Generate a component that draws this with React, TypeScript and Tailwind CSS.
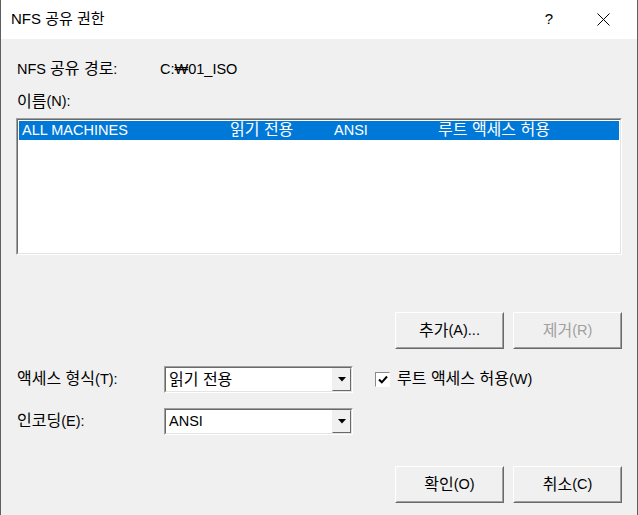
import React from 'react';

const font = "font-['Liberation_Sans','Noto_Sans_CJK_KR',sans-serif]";

// Hangul in the original dialog is rendered a bit wider than the Latin text
const T: React.FC<{ text: string }> = ({ text }) => {
  const parts = text.split(/([\uAC00-\uD7A3]+(?:\s+[\uAC00-\uD7A3]+)*)/);
  return (
    <>
      {parts.map((p, i) =>
        /[\uAC00-\uD7A3]/.test(p) ? (
          <span key={i} className="text-[16px] leading-none">
            {p}
          </span>
        ) : (
          <span key={i}>{p}</span>
        )
      )}
    </>
  );
};

// Classic Win32 sunken frame (list box, combo box)
const Sunken: React.FC<{ className?: string; children?: React.ReactNode }> = ({ className = '', children }) => (
  <div className={`border border-t-[#a0a0a0] border-l-[#a0a0a0] border-b-white border-r-white ${className}`}>
    <div className="flex h-full w-full border border-t-[#696969] border-l-[#696969] border-b-[#e3e3e3] border-r-[#e3e3e3] bg-white">
      {children}
    </div>
  </div>
);

interface DlgButtonProps {
  label: string;
  disabled?: boolean;
}

const DlgButton: React.FC<DlgButtonProps> = ({ label, disabled = false }) => (
  <div className="h-[37px] w-[109px] border border-t-white border-l-white border-b-[#696969] border-r-[#696969]">
    <div
      className={`flex h-full w-full items-center justify-center border border-t-[#f0f0f0] border-l-[#f0f0f0] border-b-[#a0a0a0] border-r-[#a0a0a0] bg-[#f0f0f0] text-[14.5px] ${
        disabled ? 'text-[#a0a0a0]' : 'text-black'
      }`}
    >
      <T text={label} />
    </div>
  </div>
);

const Combo: React.FC<{ value: string }> = ({ value }) => (
  <Sunken className="h-[27px] w-[189px]">
    <div className="flex flex-1 items-center pl-[3px] text-[14.5px] text-black">
      <T text={value} />
    </div>
    <div className="flex w-[19px] items-center justify-center border border-t-[#f0f0f0] border-l-[#f0f0f0] border-b-[#696969] border-r-[#696969] bg-[#f0f0f0]">
      <svg width="8" height="5" viewBox="0 0 8 5">
        <path d="M0 0H8L4 4.5Z" fill="#000" />
      </svg>
    </div>
  </Sunken>
);

export default function App() {
  return (
    <div className={`flex h-[515px] w-[638px] flex-col border-x border-[#5f5f5f] bg-[#f0f0f0] ${font}`}>
      {/* title bar */}
      <div className="flex h-[39px] shrink-0 items-center bg-white pl-[10px]">
        <span className="text-[15px] text-black">NFS 공유 권한</span>
        <span className="ml-auto mr-[44px] text-[15px] text-black">?</span>
        <svg width="13" height="13" viewBox="0 0 13 13" className="mr-[27px]">
          <path d="M0.5 0.5L12.5 12.5M12.5 0.5L0.5 12.5" stroke="#000" strokeWidth="1" />
        </svg>
      </div>

      <div className="flex flex-col px-[15px] text-[14.5px] text-black">
        <div className="mt-[21px] flex h-[20px] items-center pl-[1px]">
          <span className="w-[143px]">
            <T text="NFS 공유 경로:" />
          </span>
          <span>C:₩01_ISO</span>
        </div>

        <div className="mt-[12px] flex h-[20px] items-center pl-[1px]">
          <T text="이름(N):" />
        </div>

        <Sunken className="mt-[6px] h-[137px] w-[606px]">
          <div className="flex w-full flex-col p-[1px]">
            <div className="flex h-[19px] items-center bg-[#0078d7] pl-[3px] text-white">
              <span className="w-[208px]">ALL MACHINES</span>
              <span className="w-[104px]">
                <T text="읽기 전용" />
              </span>
              <span className="w-[104px]">ANSI</span>
              <span>
                <T text="루트 액세스 허용" />
              </span>
            </div>
          </div>
        </Sunken>

        <div className="mt-[57px] flex justify-end gap-[9px]">
          <DlgButton label="추가(A)..." />
          <DlgButton label="제거(R)" disabled />
        </div>

        <div className="mt-[17px] flex items-center pl-[1px]">
          <span className="w-[147px]">
            <T text="액세스 형식(T):" />
          </span>
          <Combo value="읽기 전용" />
          <div className="ml-[22px] flex items-center">
            <div className="flex h-[15px] w-[15px] items-center justify-center border border-t-[#8a8a8a] border-l-[#8a8a8a] border-b-white border-r-white bg-white">
              <svg width="10" height="9" viewBox="0 0 10 9">
                <path d="M1 4.5L3.8 7.3L9 1.5" stroke="#000" strokeWidth="2" fill="none" />
              </svg>
            </div>
            <span className="ml-[7px]">
              <T text="루트 액세스 허용(W)" />
            </span>
          </div>
        </div>

        <div className="mt-[15px] flex items-center pl-[1px]">
          <span className="w-[147px]">
            <T text="인코딩(E):" />
          </span>
          <Combo value="ANSI" />
        </div>

        <div className="mt-[31px] flex justify-end gap-[9px]">
          <DlgButton label="확인(O)" />
          <DlgButton label="취소(C)" />
        </div>
      </div>
    </div>
  );
}
